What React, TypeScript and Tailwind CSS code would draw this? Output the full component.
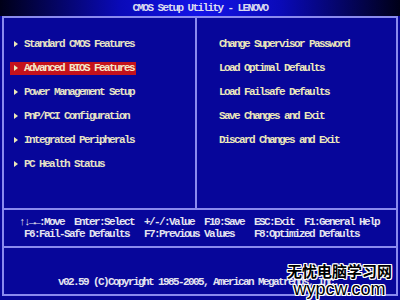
import React from "react";

const leftItems = [
  "Standard CMOS Features",
  "Advanced BIOS Features",
  "Power Management Setup",
  "PnP/PCI Configuration",
  "Integrated Peripherals",
  "PC Health Status",
];

const rightItems = [
  "Change Supervisor Password",
  "Load Optimal Defaults",
  "Load Failsafe Defaults",
  "Save Changes and Exit",
  "Discard Changes and Exit",
];

const Arrow: React.FC = () => (
  <svg width="4" height="6" viewBox="0 0 4 6" className="shrink-0">
    <path d="M0 0 L4 3 L0 6 Z" fill="#ece8b8" />
  </svg>
);

const App: React.FC = () => {
  const selected = 1;

  return (
    <div className="relative w-[400px] h-[300px] overflow-hidden bg-[#07069a] font-['Liberation_Mono','DejaVu_Sans_Mono',monospace] font-bold text-[11px] tracking-[-1.6px] leading-[12px] text-[#e6e3c6]">
      {/* title bar */}
      <div className="h-[16px] flex items-center justify-center bg-[linear-gradient(to_right,#000018,#0a0ab8_30%,#1414e8_50%,#0a0ab8_70%,#000018)] text-[#dcdcf0]">
        CMOS Setup Utility - LENOVO
      </div>

      <div className="ml-[2px] w-[396px] border-2 border-[#8a8aee] flex flex-col">
        {/* menus */}
        <div className="h-[190px] flex">
          <div className="w-[193px] border-r-2 border-[#8a8aee] pt-[14px] flex flex-col">
            {leftItems.map((item, i) => (
              <div key={item} className="h-[24px] flex items-center">
                <div
                  className={`ml-[6px] w-[126px] h-[13px] pl-[4px] flex items-center gap-[6px] ${
                    i === selected ? "bg-[#c4121c] text-[#f4e8c8]" : ""
                  }`}
                >
                  <Arrow />
                  <span className="whitespace-pre">{item}</span>
                </div>
              </div>
            ))}
          </div>
          <div className="flex-1 pt-[14px] pl-[22px] flex flex-col">
            {rightItems.map((item) => (
              <div key={item} className="h-[24px] flex items-center whitespace-pre text-[#ece8bc]">
                {item}
              </div>
            ))}
          </div>
        </div>

        {/* key help */}
        <div className="h-[38px] border-t-2 border-[#8a8aee] pt-[6px] pl-[15px] text-[#e4e4f0] whitespace-pre">
          <div>↑↓→←:Move  Enter:Select  +/-/:Value  F10:Save  ESC:Exit  F1:General Help</div>
          <div> F6:Fail-Safe Defaults   F7:Previous Values    F8:Optimized Defaults</div>
        </div>

        {/* copyright */}
        <div className="h-[48px] border-t-2 border-[#8a8aee] pt-[28px] pl-[54px] text-[#e4e4f0] whitespace-pre">
          v02.59 (C)Copyright 1985-2005, American Megatrends, Inc.
        </div>
      </div>

      {/* site watermark */}
      <div className="absolute left-[287px] top-[261px] flex flex-col items-center tracking-normal text-black [text-shadow:1px_0_#fff,-1px_0_#fff,0_1px_#fff,0_-1px_#fff,1px_1px_#fff,-1px_-1px_#fff,1px_-1px_#fff,-1px_1px_#fff]">
        <div className="font-['Noto_Sans_CJK_SC',sans-serif] text-[15px] leading-[20px] font-bold">无忧电脑学习网</div>
        <div className="font-['Liberation_Sans',sans-serif] text-[18px] leading-[16px] font-normal">wypcw.com</div>
      </div>
    </div>
  );
};

export default App;
